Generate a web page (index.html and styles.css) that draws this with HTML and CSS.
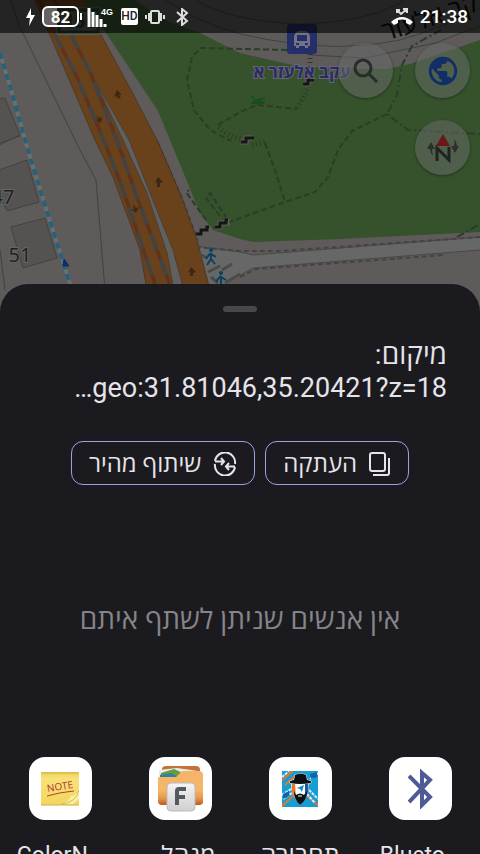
FILE: index.html
```html
<!DOCTYPE html>
<html lang="he" dir="rtl">
<head>
  <meta charset="UTF-8" />
  <meta name="viewport" content="width=device-width, initial-scale=1" />
  <title>שיתוף מיקום</title>
  <link rel="stylesheet" href="styles.css">
</head>
<body>

  <svg class="map" viewBox="0 0 480 320" preserveAspectRatio="xMidYMin slice" aria-hidden="true">
    <rect width="480" height="320" fill="#5e5b5a" />

    <!-- park -->
    <path d="M84 0H135L165 20L200 33L240 53L297 66L345 69H387L410 64L480 40V232L340 239L253 242L240 239L213 230L200 213L170 140L158 111Z" fill="#36522d" />

    <!-- streets at the top -->
    <path d="M150 0L200 29L240 44L300 57L370 59L420 49L480 26V0Z" fill="#5d5a5a" />
    <path d="M195 0Q230 21 300 24Q370 22 405 0M165 0Q210 31 270 40Q340 53 400 40Q445 27 480 8M310 55L365 58L435 43L480 26" fill="none" stroke="#444241" />

    <!-- footway at the bottom -->
    <path d="M196 246L240 252L253 255L480 237V250L253 268L240 275L224 284H207Z" fill="#676767" />
    <path d="M196 246L240 252L253 255L480 237M480 250L253 268L240 275" fill="none" stroke="#4a4948" />
    <path d="M196 247L240 251H280L480 237M240 277L256 269L444 255" fill="none" stroke="#454442" stroke-width="2" stroke-dasharray="5 3" />

    <!-- buildings -->
    <g fill="#555352" stroke="#444241">
      <path d="M-1 99L5 98L20 135L-1 145Z" />
      <path d="M-1 170L27 160L39 202L7 211L-1 192Z" />
      <path d="M11 227L45 218L57 258L23 268Z" />
    </g>
    <path d="M10 0L20 27L80 150L96 180L105 290M0 250L5 290M0 143L20 136" fill="none" stroke="#444241" />
    <path d="M0 53L10 86L28 150L48 215L72 290" fill="none" stroke="#6d6d6d" stroke-width="4" />
    <path d="M0 53L10 86L28 150L48 215L72 290" fill="none" stroke="#25627a" stroke-width="4" stroke-dasharray="6 5" />
    <path d="M64 259L69 266H63Z" fill="#0d2d67" stroke="#0d2d67" />

    <!-- highway -->
    <path d="M35 0L50 35L95 140L113 177L140 250L147 290H210L197 240L180 193L157 140L132 92L100 33L84 0Z" fill="#69421b" stroke="#493a2a" />
    <path d="M93 77L129 140L150 193L173 250L184 290H174L167 253L147 193L123 140Z" fill="#62605f" stroke="#493f35" />
    <g fill="none">
      <path d="M39 0L55 35L77 77L105 143L123 190L157 290M55 0L71 35L90 72L118 143L138 200L172 290" stroke="#444341" stroke-width="4" />
      <path d="M39 0L55 35L77 77L105 143L123 190L157 290M55 0L71 35L90 72L118 143L138 200L172 290" stroke="#69300f" stroke-width="3" stroke-dasharray="10 17" />
    </g>
    <g fill="#3d2816">
      <path d="M117 90L122 95H119L121 99L118 98L116 96L114 97Z" />
      <path d="M158 177L163 182L160 183V187H157V182L155 183Z" />
      <path d="M191 267L196 272L193 273V276H190V272L188 273Z" />
      <path d="M96 115L99 118L102 117L101 123L96 120L98 119Z" />
      <path d="M133 204L136 208L139 207L136 213L131 209L134 209Z" />
    </g>
    <path d="M158 142L181 195L198 240" fill="none" stroke="#41332a" stroke-dasharray="5 3" />

    <!-- park paths -->
    <g fill="none" stroke="#2b3c27" stroke-width="2" stroke-dasharray="6 3">
      <path d="M287 50L201 48L192 57L187 80L194 110L210 130L231 141" />
      <path d="M218 125L240 112L257 105L297 109" />
      <path d="M387 114L352 131L338 150L328 177L315 192L285 202L240 218L214 228" />
      <path d="M265 143L276 173L285 202" />
      <path d="M206 220L186 192L189 190M220 216L206 198L210 193L226 217" />
      <path d="M441 30L412 46L402 65L397 95L387 114L408 130L480 134M457 237L480 224" stroke-dasharray="8 3 2 3" />
    </g>
    <g fill="none" stroke="#2d3928" stroke-width="5" stroke-dasharray="1 3">
      <path d="M310 54V84L297 109M219 127Q227 137 242 139M252 145L265 142" />
    </g>

    <!-- stairs -->
    <g fill="none" stroke="#5f605d" stroke-width="5">
      <path d="M196 234H201V230H208V226M215 227H220V223H227V219M241 142H246V138H253M303 84H308V80H313" />
    </g>
    <g fill="none" stroke="#151515" stroke-width="3">
      <path d="M196 234H201V230H207V227H209M215 227H220V223H226V220H228M241 142H246V138H254M303 84H308V80H314" />
    </g>
    <path d="M251 95L255 100L265 98L260 101L265 103L258 104L251 103L255 101Z" fill="#164f1d" stroke="#164f1d" />

    <!-- crossing -->
    <path d="M199 254L207 258M208 272L220 266M211 277L218 283M222 270L232 264M225 283L240 274" stroke="#4c4b4a" stroke-width="3" />
    <g fill="none" stroke="#0b4063" stroke-width="2">
      <path d="M211 253L208 256L206 259M211 253V259L207 265M211 259L215 264M211 254L216 257" />
      <path d="M221 276L218 279L216 282M221 276V284M221 277L226 280" />
    </g>
    <circle cx="211" cy="250" r="2" fill="#0b4063" />
    <circle cx="221" cy="273" r="2" fill="#0b4063" />

    <!-- bus stop -->
    <rect x="287" y="24" width="30" height="30" rx="3" fill="#252e68" />
    <path d="M296 32Q302 29 308 32L310 36V46H308V48H305V46H299V48H296V46H294V36ZM297 35V41H307V35ZM296 43V45H299V43ZM305 43V45H308V43Z" fill="#727384" fill-rule="evenodd" />

    <!-- road number -->
    <rect x="56" y="7" width="45" height="28" rx="3" fill="#5e5b5a" />
    <rect x="59" y="10" width="39" height="22" fill="none" stroke="#1d3f23" stroke-width="3" />
    <text class="road-no" x="80" y="28">156</text>

    <text class="house" x="3" y="204">47</text>
    <text class="house" x="20" y="262">51</text>
    <text class="stop-name" x="302" y="78">עקב אלעזר א</text>
    <text class="street-name" x="438" y="24" transform="rotate(-18 438 18)">עקב אלעזר</text>
  </svg>

  <div class="statusbar" dir="ltr">
    <div class="status-group">
      <svg width="9" height="18" viewBox="0 0 9 18"><path d="M5 0L0 10H4L3 18L9 7H5Z" fill="#fff" /></svg>
      <span class="battery">82</span>
      <svg width="28" height="22" viewBox="0 0 28 22">
        <path d="M3 2V21M7 6V21M11 9V21M15 13V21M19 18V21" stroke="#fff" stroke-width="3" />
        <text class="network" x="15" y="9">4G</text>
      </svg>
      <span class="hd">HD</span>
      <svg width="20" height="16" viewBox="0 0 20 16" fill="none" stroke="#ddd" stroke-width="2"><rect x="6" y="2" width="8" height="12" rx="1" /><path d="M4 4V12M16 4V12M1 6V10M19 6V10" /></svg>
      <svg class="status-bt" width="13" height="18" viewBox="0 0 13 18" fill="none" stroke="#ddd" stroke-width="2"><path d="M1 4L11 13L6 17V1L11 5L1 14" /></svg>
    </div>
    <div class="status-group">
      <svg width="22" height="18" viewBox="0 0 22 18">
        <path d="M0 14Q11 4 22 14L19 17L15 15V12Q11 11 7 12V15L3 17Z" fill="#fff" />
        <path d="M6 2L10 6L16 1M12 1H16V5M6 5V2H9" fill="none" stroke="#ddd" stroke-width="2" />
      </svg>
      <span class="clock">21:38</span>
    </div>
  </div>

  <div class="map-buttons" dir="ltr">
    <button class="round" aria-label="חיפוש">
      <svg width="26" height="26" viewBox="0 0 26 26" fill="none" stroke="#292c29" stroke-width="3"><circle cx="10" cy="10" r="8" /><path d="M15 15L24 24" /></svg>
    </button>
    <button class="round" aria-label="שכבות מפה">
      <svg width="34" height="34" viewBox="0 0 24 24"><path d="M12 2C6.48 2 2 6.48 2 12s4.48 10 10 10 10-4.48 10-10S17.52 2 12 2zm-1 17.93c-3.95-.49-7-3.85-7-7.93 0-.62.08-1.21.21-1.79L9 15v1c0 1.1.9 2 2 2v1.93zm6.9-2.54c-.26-.81-1-1.39-1.9-1.39h-1v-3c0-.55-.45-1-1-1H8v-2h2c.55 0 1-.45 1-1V7h2c1.1 0 2-.9 2-2v-.41c2.93 1.19 5 4.06 5 7.41 0 2.08-.8 3.97-2.1 5.39z" fill="#102f68" /></svg>
    </button>
    <button class="round" aria-label="מצפן">
      <svg width="34" height="34" viewBox="0 0 34 34">
        <path d="M17 3L24 15H10Z" fill="#6b1717" />
        <path d="M11 30V17L23 29V16" fill="none" stroke="#202421" stroke-width="3" />
        <path d="M5 11L1 18H4Q4 22 7 25Q6 21 6 18H9ZM29 22L33 15H31Q31 11 28 8Q29 12 28 15H25Z" fill="#2b302b" />
      </svg>
    </button>
  </div>

  <main class="sheet">
    <div class="handle"></div>
    <p class="shared-text"><span class="title">מיקום:</span><br>geo:31.81046,35.20421?z=18…</p>

    <div class="actions">
      <button class="action">
        <svg width="22" height="26" viewBox="0 0 22 26" fill="none" stroke="#e6e4ea" stroke-width="2"><rect x="1" y="2" width="15" height="18" rx="2" /><path d="M20 7V22Q20 24 18 24H4" /></svg>
        העתקה
      </button>
      <button class="action">
        <svg width="24" height="24" viewBox="0 0 24 24" fill="none" stroke="#e6e4ea" stroke-width="2"><path d="M2 9A10 10 0 0 1 22 12M22 15A10 10 0 0 1 2 12M2 9.500H10M8 6L11 9.500L8 13M22 14.500H14M16 11L13 14.500L16 18" /></svg>
        שיתוף מהיר
      </button>
    </div>

    <p class="no-people">אין אנשים שניתן לשתף איתם</p>

    <div class="apps">
      <a class="app" href="#">
        <span class="app-icon">
          <svg width="25" height="40" viewBox="0 0 25 40" fill="none" stroke="#4e5b96" stroke-width="4"><path d="M1 7L22 28L14 36V4L22 11L1 33" /></svg>
        </span>
        <span dir="ltr">Blueto…</span>
      </a>
      <a class="app" href="#">
        <span class="app-icon">
          <svg width="36" height="36" viewBox="0 0 36 36">
            <rect width="36" height="36" fill="#169dd5" />
            <path d="M0 9L11 0M3 14L14 4M0 35L12 24M24 24L36 34" stroke="#e77724" stroke-width="2" />
            <path d="M0 6L7 0M0 24L9 18M1 28L10 22M27 19L36 28M25 23L33 32M28 8L36 2" stroke="#d8edf5" stroke-width="2" stroke-dasharray="3 1" />
            <path d="M28 3L35 1V6L29 8ZM1 23L7 20V25L1 28ZM28 23L35 29" fill="#1662a2" />
            <path d="M9 12Q8 23 18 34Q28 23 27 12Z" fill="#fff" />
            <path d="M10 12Q8 21 14 28L13 12Z" fill="#ea7624" />
            <path d="M26 12Q28 21 23 27V12Z" fill="#1b5b9a" />
            <path d="M8 10L12 9L13 4Q18 1 24 4L25 9L29 10V12Q18 14 8 12Z" fill="#0b1015" stroke="#fff" paint-order="stroke" />
            <path d="M12 20L14 24Q18 21 22 24L25 20Q25 29 18 34Q12 29 12 20Z" fill="#0b1015" />
            <path d="M15 17L22 14L20 21L18 18Z" fill="#168cc9" />
            <path d="M16 25H20" stroke="#fff" />
          </svg>
        </span>
        <span class="hebrew">תחבורה</span>
      </a>
      <a class="app" href="#">
        <span class="app-icon">
          <svg width="47" height="48" viewBox="0 0 47 48">
            <defs>
              <linearGradient id="folder" x2="0" y2="1"><stop offset="0" stop-color="#f4b36a" /><stop offset=".55" stop-color="#f4b768" /><stop offset=".8" stop-color="#e29a4c" /><stop offset="1" stop-color="#c3541d" /></linearGradient>
              <linearGradient id="key" x2="0" y2="1"><stop stop-color="#f4f4f4" /><stop offset="1" stop-color="#cfcfcf" /></linearGradient>
            </defs>
            <path d="M5 3Q6 1 9 1H39Q43 1 43 5V14H5Z" fill="#c5723a" />
            <path d="M2 5L20 3L41 6V16H2Z" fill="#e8ece9" />
            <path d="M4 8L17 4L30 10L20 15H3Z" fill="#5f9f3d" />
            <path d="M3 10L14 8L23 13V17H3Z" fill="#347fa0" />
            <path d="M2 12H19L24 7Q25 6 27 6H42Q46 6 46 10V37Q46 40 42 40H5Q1 40 1 36V13Z" fill="url(#folder)" />
            <rect x="10" y="18" width="28" height="28" rx="4" fill="url(#key)" stroke="#bbb" />
            <path d="M20 40V26Q20 24 22 24H29M20 32H28" fill="none" stroke="#505a60" stroke-width="4" />
          </svg>
        </span>
        <span class="hebrew">מנהל…</span>
      </a>
      <a class="app" href="#">
        <span class="app-icon">
          <svg width="38" height="34" viewBox="0 0 38 34">
            <defs><linearGradient id="note" x2="0" y2="1"><stop stop-color="#edcf51" /><stop offset=".2" stop-color="#f8e279" /><stop offset="1" stop-color="#f3d55b" /></linearGradient></defs>
            <path d="M0 0H38V33H0Z" fill="url(#note)" />
            <path d="M0 1H38M0 33H38" stroke="#d2b044" />
            <path d="M20 32Q29 29 30 24Q34 25 38 18V27L32 32Z" fill="#fbf0a4" />
            <path d="M20 32Q35 31 38 18" fill="none" stroke="#d7b849" />
            <text class="note-text" x="19" y="18" transform="rotate(-9 19 15)">NOTE</text>
            <path d="M6 24Q20 20 33 19" fill="none" stroke="#b23c3d" />
          </svg>
        </span>
        <span dir="ltr">ColorN…</span>
      </a>
    </div>
  </main>

</body>
</html>
```
FILE: styles.css
```css
* {
  box-sizing: border-box;
}

body {
  margin: 0;
  height: 100vh;
  display: flex;
  flex-direction: column;
  position: relative;
  overflow: hidden;
  background: #1b1b1f;
  color: #e6e4ea;
  font-family: Roboto, "Open Sans", "Noto Sans", sans-serif;
}

p {
  margin: 0;
}

button {
  font: inherit;
  color: inherit;
  cursor: pointer;
}

/* map behind everything */
.map {
  position: absolute;
  top: 0;
  left: 0;
  width: 100%;
  height: 320px;
  direction: ltr;
}

.map text {
  text-anchor: middle;
}

.map .house {
  font: 20px "Noto Sans", sans-serif;
  fill: #222;
  stroke: #666;
  stroke-width: 2px;
  paint-order: stroke;
}

.map .stop-name {
  font: bold 17px "Open Sans", sans-serif;
  fill: #2c2b61;
  stroke: #686777;
  stroke-width: 2px;
  paint-order: stroke;
  direction: rtl;
}

.map .street-name {
  font: 26px "Open Sans", sans-serif;
  fill: #0c0c0c;
  direction: rtl;
}

.map .road-no {
  font: bold 19px "Noto Sans", sans-serif;
  fill: #1d3f23;
}

.statusbar {
  position: relative;
  display: flex;
  justify-content: space-between;
  align-items: center;
  height: 33px;
  padding: 0 12px 0 26px;
  background: rgba(0, 0, 0, 0.6);
  color: #fff;
}

.status-group {
  display: flex;
  align-items: center;
  gap: 7px;
}

.battery {
  position: relative;
  width: 37px;
  height: 21px;
  border: 2px solid #fff;
  border-radius: 6px;
  background: linear-gradient(90deg, #69635f 40%, transparent 40%);
  font-size: 17px;
  font-weight: bold;
  line-height: 18px;
  text-align: center;
}

.battery::after {
  content: "";
  position: absolute;
  top: 5px;
  right: -5px;
  width: 2px;
  height: 7px;
  background: #fff;
}

.network {
  font: bold 9px "Liberation Sans", sans-serif;
  fill: #fff;
}

.hd {
  width: 17px;
  border-radius: 2px;
  background: #fff;
  color: #222;
  font-size: 12px;
  font-weight: 500;
  line-height: 17px;
  text-align: center;
}

.status-bt {
  margin-left: 4px;
}

.clock {
  font-size: 19px;
  font-weight: 500;
  line-height: 24px;
}

.map-buttons {
  position: relative;
  height: 251px;
  padding: 10px 10px 0 0;
  display: grid;
  grid-template-columns: 55px 55px;
  grid-auto-rows: 55px;
  gap: 22px;
  justify-content: end;
}

.round {
  display: grid;
  place-items: center;
  padding: 0;
  border: 0;
  border-radius: 50%;
  background: rgba(104, 108, 106, 0.5);
  box-shadow: 0 1px 3px rgba(0, 0, 0, 0.4);
}

.round:last-child {
  grid-column: 2;
}

/* share sheet */
.sheet {
  position: relative;
  flex: 1;
  min-height: 0;
  overflow: hidden;
  padding-top: 22px;
  border-radius: 28px 28px 0 0;
  background: #1b1b1f;
}

.handle {
  width: 34px;
  height: 6px;
  margin: 0 auto;
  border-radius: 3px;
  background: #48474c;
}

.shared-text {
  margin: 26px 33px 0;
  font-size: 27px;
  line-height: 33px;
}

.title {
  font-size: 28px;
}

.actions {
  display: flex;
  justify-content: center;
  gap: 10px;
  margin-top: 36px;
}

.action {
  display: flex;
  align-items: center;
  gap: 12px;
  height: 44px;
  padding: 2px 17px 0;
  border: 1px solid #99a3e3;
  border-radius: 12px;
  background: transparent;
  font-size: 24px;
  line-height: 32px;
}

.no-people {
  margin: 116px 20px 0;
  color: #858489;
  font-size: 28px;
  line-height: 38px;
  text-align: center;
}

.apps {
  display: grid;
  grid-template-columns: repeat(4, 1fr);
  margin-top: 118px;
}

.app {
  display: flex;
  flex-direction: column;
  align-items: center;
  gap: 22px;
  color: inherit;
  font-size: 23px;
  line-height: 28px;
  text-decoration: none;
  white-space: nowrap;
}

.hebrew {
  font-size: 25px;
}

.app-icon {
  display: grid;
  place-items: center;
  width: 63px;
  height: 63px;
  border-radius: 16px;
  background: #fff;
}

.note-text {
  font: 10px "Noto Sans", sans-serif;
  text-anchor: middle;
  direction: ltr;
  fill: #b23c3d;
}
```
